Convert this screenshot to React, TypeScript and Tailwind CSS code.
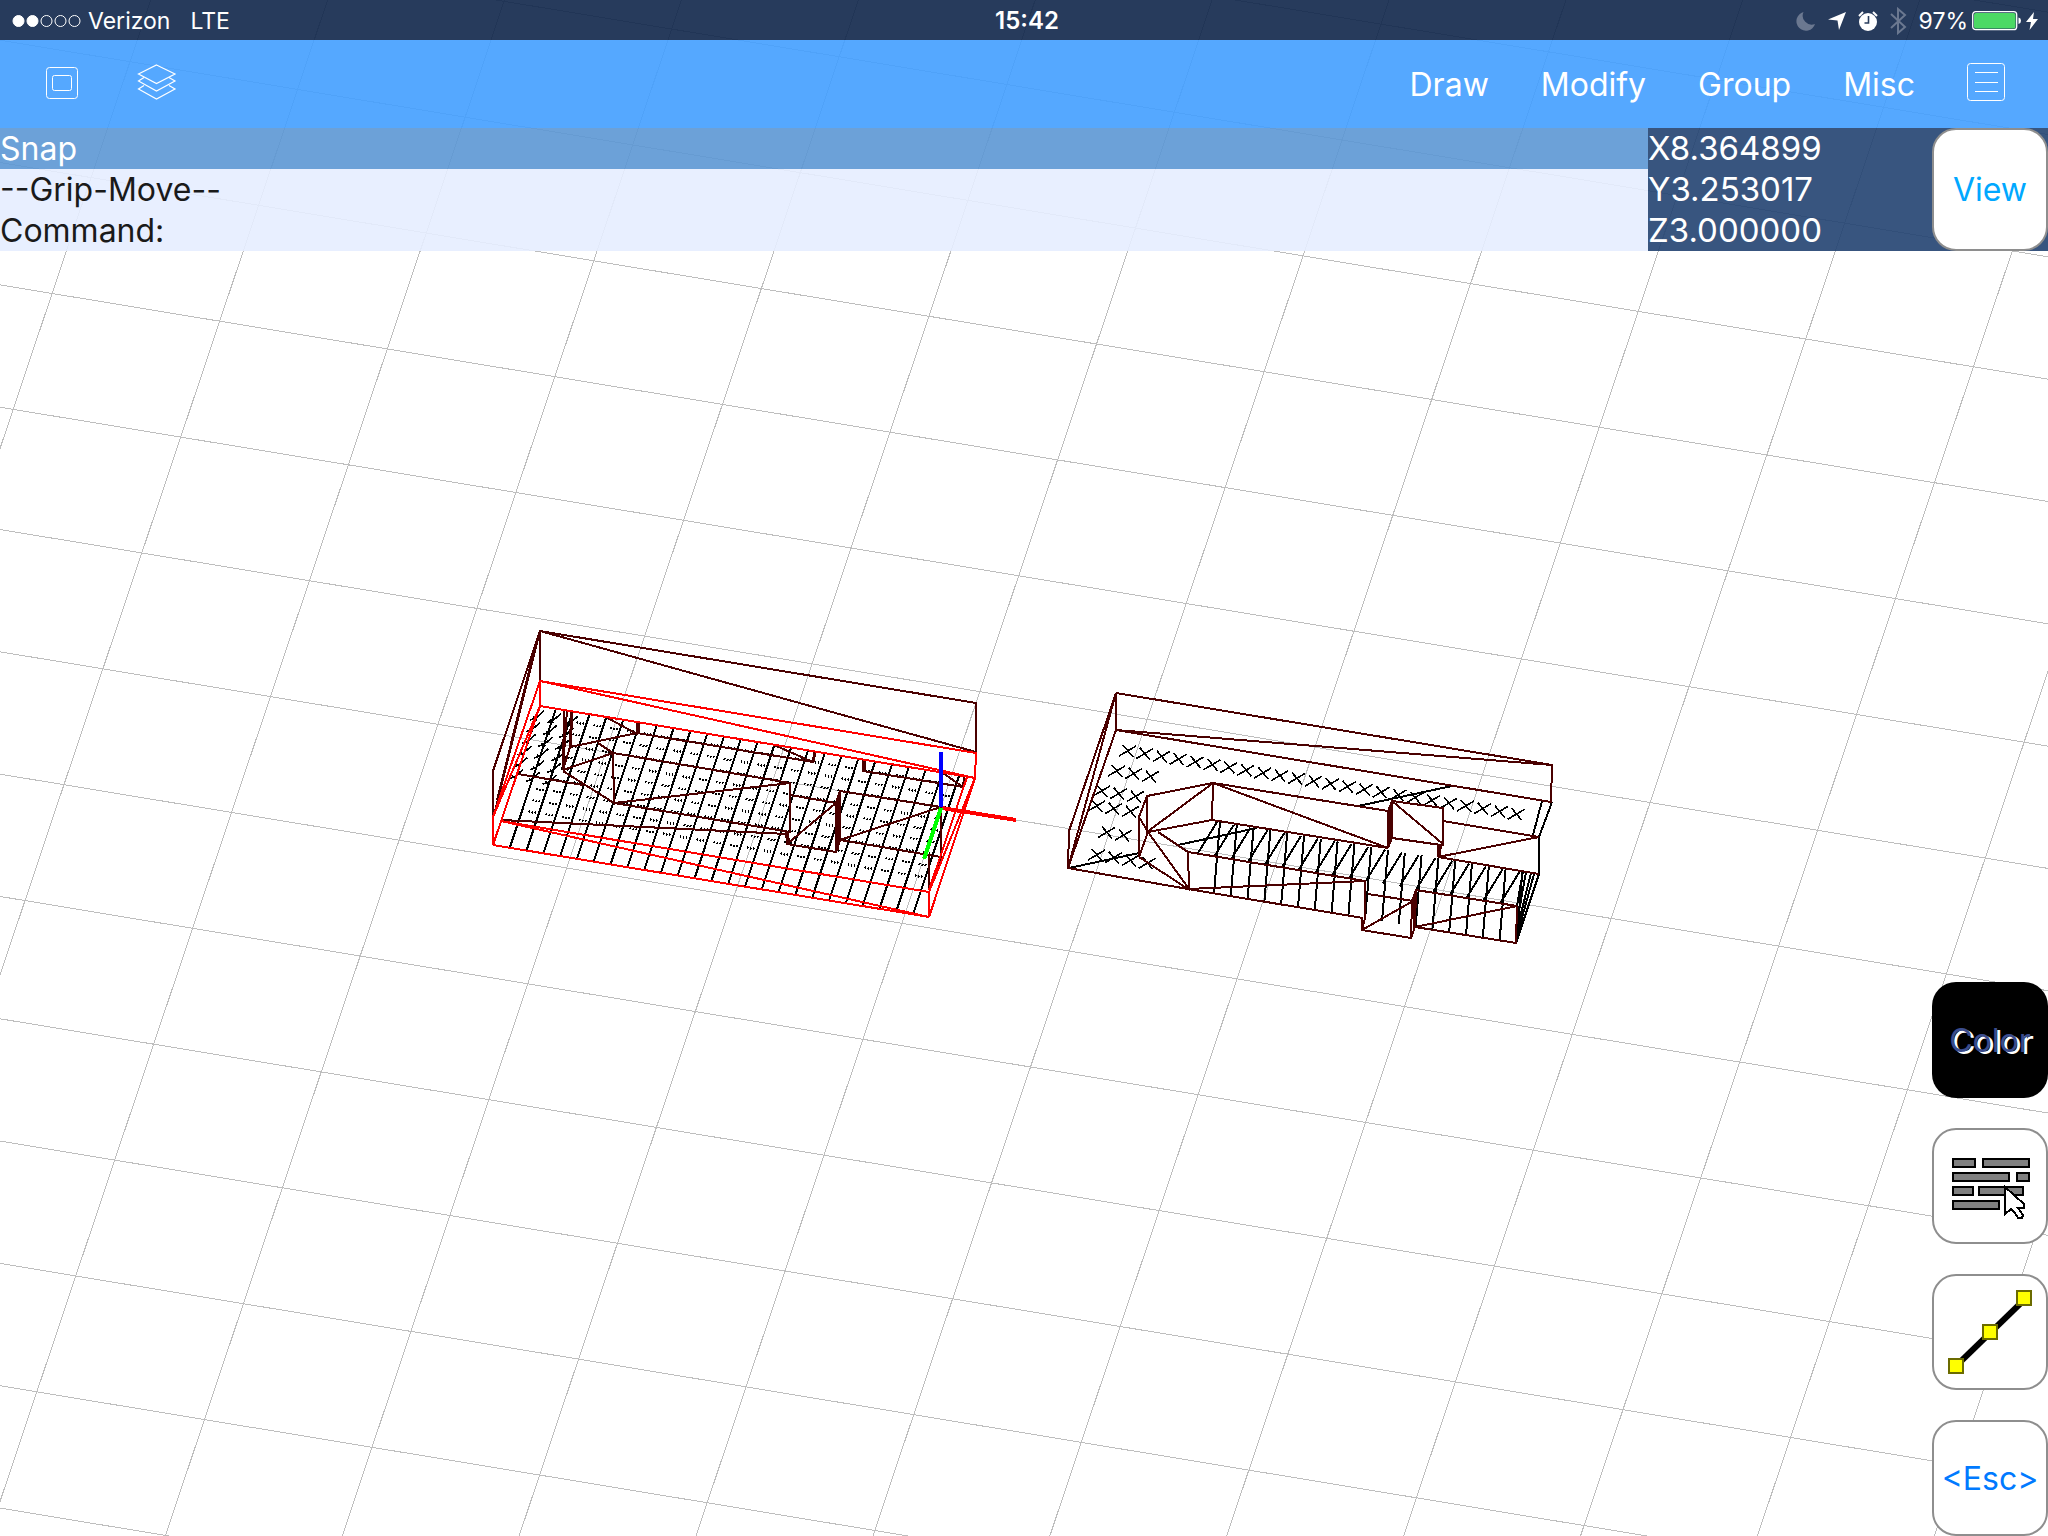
const GRID_SLOPE = 0.1655;
const GRID_LEAN = 0.336;

const range = (n: number, from = 0) => Array.from({ length: n }, (_, i) => i + from);

// "x1 y1 x2 y2 ..." per polyline
const toPath = (lines: string[]) => lines.map(l => "M" + l).join("");

function Grid() {
    return (
        <g stroke="#bebebe">
            {range(16, -3).map(k => {
                const y = 40.2 + k * 122.32;
                return <line key={"a" + k} x1={0} y1={y} x2={4096} y2={y + 4096 * GRID_SLOPE} />;
            })}
            {range(28).map(k => {
                const x = 150.7 + k * 176.9;
                return <line key={"b" + k} x1={x} y1={0} x2={x - 3072 * GRID_LEAN} y2={3072} />;
            })}
        </g>
    );
}

const LEFT_DARK = [
    "540 631 976 703 976 752 540 631 540 681",
    "540 631 493 771 493 815",
    "540 631 494 815",
    "536 643 497 800",
    "606 717 637 734 637 722",
    "639 723 639 732",
    "813 762 637 733 570 747 571 711",
    "567 710 563 770 570 747",
    "564 710 563 770",
    "572 712 571 747",
    "563 770 613 753 598 743",
    "613 753 614 803 563 771",
    "613 753 755 777",
    "755 777 790 783 790 832 614 803 790 783",
    "501 820 787 834",
    "518 774 583 785",
    "774 745 813 762 814 752",
    "815 752 814 762",
    "863 760 863 771 963 787 940 771",
    "865 760 865 771",
    "964 777 963 787",
    "786 832 787 844 836 852 836 803 787 844",
    "788 832 789 843",
    "790 795 836 803 840 791 941 807 840 840 941 857 941 807",
    "838 796 838 850",
    "840 791 840 840 836 852",
    "929 855 929 890 941 857",
];

const LEFT_RED = [
    "493 817 540 681 976 753 975 778 540 681 540 706 975 778",
    "540 706 493 817 493 845 540 706",
    "493 845 929 917 501 821 929 892 929 917 975 778 929 892",
    "929 890 967 777",
];

const RIGHT_DARK = [
    "1116 693 1552 765 1551 802 1116 730 1552 765",
    "1116 730 1116 693 1069 831 1068 868 1116 693",
    "1116 730 1068 868 1188 889 1363 918",
    "1539 837 1443 821",
    "1438 857 1539 837",
    "1438 857 1539 874",
    "1392 801 1443 808 1443 844 1392 801 1392 838 1441 845",
    "1390 806 1390 843",
    "1388 811 1388 848 1392 838",
    "1392 801 1388 811",
    "1438 845 1438 857 1442 844",
    "1440 845 1440 857",
    "1388 811 1213 783 1388 848 1212 820 1213 783",
    "1213 783 1147 796 1147 832 1213 783",
    "1147 796 1139 817 1139 857 1148 832 1139 817",
    "1148 832 1212 820",
    "1158 832 1188 852 1189 889 1148 832",
    "1139 857 1188 889 1365 881",
    "1188 852 1365 881 1365 918 1362 930 1413 901 1368 894",
    "1362 918 1362 930 1411 938 1412 901 1416 890",
    "1414 896 1414 928",
    "1411 938 1415 927 1416 890 1517 906 1415 927 1516 943 1517 906",
];

const RIGHT_BLACK = [
    "1542 801 1533 835",
    "1552 802 1539 837 1539 874 1516 943",
    "1531 873 1517 930",
    "1526 872 1517 922",
    "1523 871 1517 906",
    "1534 874 1517 936",
    "1069 868 1139 853",
    "1178 845 1257 828",
    "1358 806 1452 786",
];

const CROSSES = [
    ...range(24).map(i => [1128 + i * 16.9, 751 + i * 2.75]),
    ...range(3).map(i => [1117 + i * 16.9, 771 + i * 2.75]),
    ...range(3).map(i => [1102 + i * 16.9, 791 + i * 2.75]),
    ...range(3).map(i => [1097 + i * 16.9, 806 + i * 2.75]),
    ...range(2).map(i => [1107 + i * 16.9, 832.5 + i * 2.75]),
    ...range(4).map(i => [1097 + i * 16.9, 855 + i * 2.75]),
];

function LeftModel() {
    const roofY = (x: number) => 708.6 + GRID_SLOPE * (x - 556);
    const baseY = (x: number) => 847 + GRID_SLOPE * (x - 510);
    const stripes = range(25).map(i => 510 + i * 16.8);
    return (
        <g strokeWidth={2}>
            <g stroke="#000">
                {stripes.map(x => <line key={x} x1={x + 46} y1={roofY(x + 46)} x2={x} y2={baseY(x)} />)}
            </g>
            <g stroke="#000" strokeWidth={1.6}>
                {stripes.slice(0, 24).map((x, i) => range(9).map(r => {
                    const cx = x + 51 - r * 3.9;
                    const cy = roofY(x + 46) + 10 + r * 11.5;
                    return i < 1 && r < 6 ? null : <path key={i + "-" + r} d={`M${cx} ${cy}l-1 2m4 -1l-1 2m4 -2l-1 2`} />;
                }))}
                {range(3).map(c => range(6).map(r => {
                    const cx = 530 + c * 16.8 - r * 4.2;
                    const cy = 720 + c * 2.8 + r * 11.7;
                    return <path key={c + "-" + r} d={`M${cx} ${cy}l6 -2l8 -7M${cx + 3} ${cy - 3}l4 3`} />;
                }))}
            </g>
            <path d={toPath(LEFT_DARK)} stroke="#4a0000" />
            <path d={toPath(LEFT_RED)} stroke="#f00" />
            <g strokeWidth={4}>
                <path d="M942 808 1016 820" stroke="#f00" />
                <path d="M941 752V807" stroke="#00f" />
                <path d="M941 808 924 859" stroke="#0f0" />
            </g>
        </g>
    );
}

function RightModel() {
    return (
        <g strokeWidth={2}>
            <g stroke="#000">
                {range(19).map(i => {
                    const x = 1220 + i * 16.8;
                    const y = 822 + i * 2.78;
                    return <path key={i} d={`M${x} ${y}L${x - 6} ${y + 71}M${x - 3} ${y}l-19 31`} />;
                })}
                {CROSSES.map(([x, y], i) => (
                    <path key={i} d={`M${x - 9} ${y + 5}l17 -10M${x - 5} ${y - 6}l10 12`} strokeWidth={1.6} />
                ))}
            </g>
            <path d={toPath(RIGHT_BLACK)} stroke="#000" />
            <path d={toPath(RIGHT_DARK)} stroke="#4a0000" />
        </g>
    );
}

function Viewport() {
    return (
        <svg className="absolute inset-0 h-full w-full" fill="none" shapeRendering="crispEdges" aria-label="Drawing">
            <Grid />
            <RightModel />
            <LeftModel />
        </svg>
    );
}

function StatusBar() {
    return (
        <div className="grid h-10 grid-cols-3 items-center bg-[#10264a]/90 pt-0.5 text-[23px]">
            <div className="flex items-center pl-3">
                <svg width="70" height="14" viewBox="0 0 70 14" stroke="#fff">
                    {range(5).map(i => <circle key={i} cx={6.5 + i * 14} cy="7" r="5.5" fill={i < 2 ? "#fff" : "none"} />)}
                </svg>
                <span className="ml-1.5">Verizon</span>
                <span className="ml-5">LTE</span>
            </div>
            <div className="pl-1.5 text-center text-2xl font-semibold">15:42</div>
            <div className="flex items-center justify-end pr-2.5">
                <svg width="20" height="20" viewBox="0 0 20 20" fill="#6b7890">
                    <path d="M7.500 1A9.500 9.500 0 1 0 19 13A9 9 0 0 1 7.500 1Z" />
                </svg>
                <svg className="ml-3" width="18" height="18" viewBox="0 0 18 18" fill="#fff">
                    <path d="M18 0 11 18 9.500 8.500 0 7.500Z" />
                </svg>
                <svg className="ml-3" width="20" height="20" viewBox="0 0 20 20" fill="#fff">
                    <circle cx="10" cy="11" r="9" />
                    <path d="M1 5 5 1M19 5 15 1" stroke="#fff" strokeWidth="2" />
                    <path d="M10.500 5V12H6.500" fill="none" stroke="#283c5c" strokeWidth="1.600" />
                </svg>
                <svg className="ml-3" width="17" height="28" viewBox="0 0 17 28" fill="none" stroke="#6b7890" strokeWidth="2">
                    <path d="M1 7 15 20 8 26V2L15 8 1 21" />
                </svg>
                <span className="ml-3">97%</span>
                <svg className="ml-1" width="50" height="20" viewBox="0 0 50 20">
                    <rect x=".7" y=".7" width="44" height="18" rx="3" fill="none" stroke="#fff" strokeWidth="1.300" />
                    <rect x="2" y="2" width="41.500" height="15.500" rx="2" fill="#4cd964" />
                    <path d="M46.500 6.500Q49 7 49 9.700T46.500 13Z" fill="#fff" />
                </svg>
                <svg className="ml-1" width="12" height="20" viewBox="0 0 12 20" fill="#fff">
                    <path d="M8 1 0 11H5L3.500 19 12 8H7Z" />
                </svg>
            </div>
        </div>
    );
}

function Toolbar() {
    return (
        <nav className="flex h-[88px] items-center bg-[#429fff]/90 pr-[42px] pb-1 pl-[45px]">
            <button className="pt-0.5" aria-label="Fit to screen">
                <svg width="34" height="34" viewBox="0 0 34 34" fill="none" stroke="#fff">
                    <rect x="1.500" y="1.500" width="31" height="31" rx="3" />
                    <rect x="7.500" y="9.500" width="19" height="15" rx="2" />
                </svg>
            </button>
            <button className="ml-[58px]" aria-label="Layers">
                <svg width="40" height="38" viewBox="0 0 40 38" fill="none" stroke="#fff" strokeWidth="1.200">
                    <path d="M19.500 2 38 11 19.500 20.500 1.500 11Z" />
                    <path d="M7 14.500 1.500 18 19.500 28 38 18 32 14.500" />
                    <path d="M7 22.500 1.500 26 19.500 36 38 26 32 22.500" />
                </svg>
            </button>
            <div className="ml-auto flex items-center gap-[52px]">
                {["Draw", "Modify", "Group", "Misc"].map(m => <button key={m} className="pt-1.5">{m}</button>)}
                <button aria-label="Menu">
                    <svg width="39" height="39" viewBox="0 0 39 39" fill="none" stroke="#fff">
                        <rect x=".5" y=".5" width="37" height="37" rx="3" />
                        <path d="M8 9.500H31M8 19.500H31M8 28.500H31" />
                    </svg>
                </button>
            </div>
        </nav>
    );
}

const sideButton = "flex h-[116px] w-[116px] items-center justify-center rounded-3xl border-2 border-[#8e8e8e] bg-white pt-0.5";

export default function App() {
    return (
        <div className="relative flex min-h-screen flex-col overflow-hidden bg-white font-[Inter,sans-serif] text-[32px] text-white">
            <Viewport />
            <header className="relative">
                <StatusBar />
                <Toolbar />
                <div className="flex">
                    <div className="flex-1 leading-[41px]">
                        <div className="bg-[#5c97d4]/90">Snap</div>
                        <div className="bg-[#e5edff]/90 text-[#1a1a1a]">
                            <div>--Grip-Move--</div>
                            <div>Command:</div>
                        </div>
                    </div>
                    <div className="flex w-[400px] justify-between bg-[#224271]/90 leading-[41px]">
                        <div className="text-[33px]">
                            <div>X8.364899</div>
                            <div>Y3.253017</div>
                            <div>Z3.000000</div>
                        </div>
                        <button className="w-[116px] rounded-3xl border-2 border-[#8e8e8e] bg-white text-[#00a8ff]">View</button>
                    </div>
                </div>
            </header>
            <aside className="relative mt-auto flex flex-col gap-[30px] self-end">
                <button className="flex h-[116px] w-[116px] items-center justify-center rounded-3xl bg-black pt-0.5 text-[#3b4c8c]">
                    <span className="[text-shadow:3px_2px_0_#fff]">Color</span>
                </button>
                <button className={sideButton} aria-label="Select">
                    <svg width="80" height="64" viewBox="0 0 80 64" shapeRendering="crispEdges">
                        <g fill="#808080" stroke="#000" strokeWidth="2">
                            <path d="M3 4H25V12H3ZM33 4H79V12H33ZM3 18H59V26H3ZM67 18H79V26H67ZM3 32H23V40H3ZM29 32H73V40H29ZM3 46H49V54H3Z" />
                        </g>
                        <path d="M55 32V59L61 54 65 58 68 63 72 63 73 60 68 53H74V49Z" fill="#fff" stroke="#000" strokeWidth="2" />
                    </svg>
                </button>
                <button className={sideButton} aria-label="Grips">
                    <svg width="84" height="86" viewBox="0 0 84 86">
                        <path d="M8 76 76 10" stroke="#000" strokeWidth="6" />
                        <g fill="#ff0" stroke="#6b6b00" strokeWidth="2">
                            <rect x="1" y="69" width="14" height="14" />
                            <rect x="35" y="35" width="14" height="14" />
                            <rect x="69" y="1" width="14" height="14" />
                        </g>
                    </svg>
                </button>
                <button className={sideButton + " text-[#007aff]"}>&lt;Esc&gt;</button>
            </aside>
        </div>
    );
}
